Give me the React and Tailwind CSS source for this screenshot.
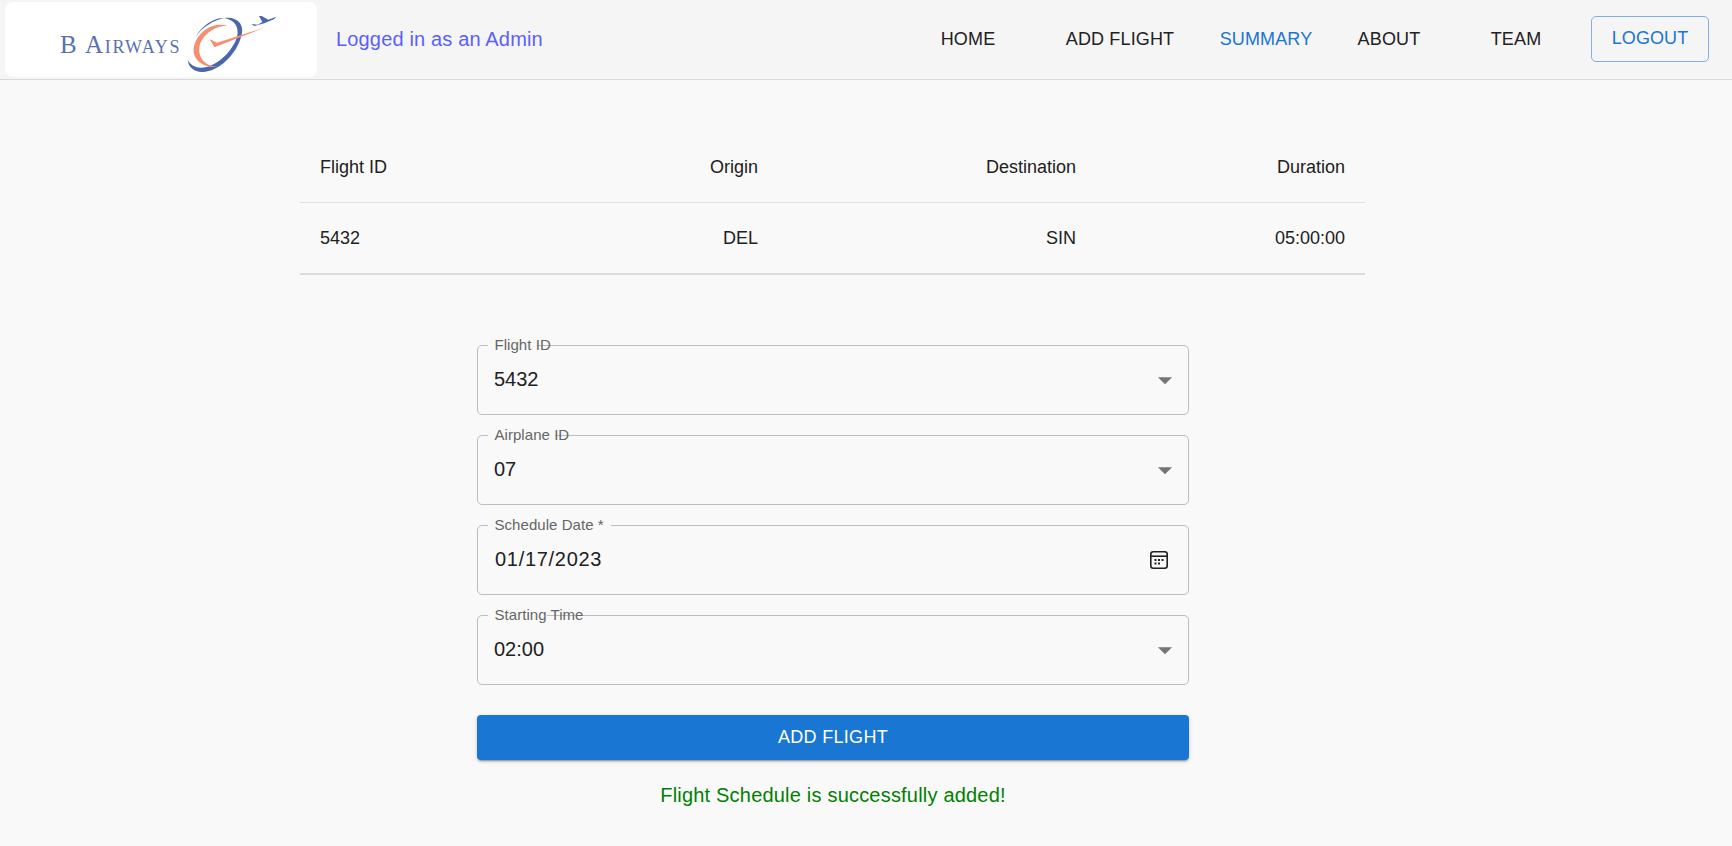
import React from "react";

const navItems = [
  { label: "HOME", width: "w-[150px]", color: "text-[#212121]" },
  { label: "ADD FLIGHT", width: "w-[154px]", color: "text-[#212121]" },
  { label: "SUMMARY", width: "w-[138px]", color: "text-[#1976d2]" },
  { label: "ABOUT", width: "w-[108px]", color: "text-[#212121]" },
  { label: "TEAM", width: "w-[146px]", color: "text-[#212121]" },
];

const fields = [
  { label: "Flight ID", value: "5432", notch: "w-[49px]", icon: "arrow" },
  { label: "Airplane ID", value: "07", notch: "w-[67px]", icon: "arrow" },
  { label: "Schedule Date *", value: "01/17/2023", notch: "w-[123px]", icon: "calendar" },
  { label: "Starting Time", value: "02:00", notch: "w-[59px]", icon: "arrow" },
];

const LogoMark = () => (
  <svg width="94" height="60" viewBox="105 30 280 180" className="mt-[8px] shrink-0">
    <path
      d="M222 42C262 38 285 62 272 100C258 150 205 205 155 204C130 203 115 190 112 168C122 185 140 195 165 190C215 180 262 120 262 85C262 60 245 46 222 42Z"
      fill="#4a67ae"
    />
    <path d="M222 42C190 40 155 65 135 100C155 70 190 48 222 42Z" fill="#4a67ae" />
    <path
      d="M232 66C190 50 135 85 130 135C127 170 165 195 205 188C170 190 143 165 147 130C152 95 195 62 232 66Z"
      fill="#f58f72"
    />
    <path d="M178 105L200 116L345 70L192 130Z" fill="#f58f72" />
    <path
      d="M303 60L322 62L336 54L326 36L334 36L354 47L378 38L372 45L342 58L312 66Z"
      fill="#4a67ae"
    />
  </svg>
);

const ArrowIcon = () => (
  <svg width="34" height="34" viewBox="0 0 24 24" fill="#757575">
    <path d="M7 10l5 5 5-5z" />
  </svg>
);

const CalendarIcon = () => (
  <svg width="20" height="20" viewBox="0 0 20 20" fill="none">
    <rect x="1.800" y="1.800" width="16.400" height="16.400" rx="2.500" stroke="#212121" strokeWidth="1.600" />
    <path d="M2 6.200h16" stroke="#212121" strokeWidth="1.600" />
    <path
      d="M5.500 9h2v2h-2zM9 9h2v2h-2zM12.500 9h2v2h-2zM5.500 12.500h2v2h-2zM9 12.500h2v2h-2z"
      fill="#212121"
    />
  </svg>
);

const Field = ({ label, value, notch, icon }) => (
  <div className="relative flex h-[70px] items-center justify-between rounded-[5px] border border-[#bdbdbd] pl-[16px] pr-[6px]">
    <span className={`absolute left-[10px] top-[-2px] h-[3px] bg-[#f9f9f9] ${notch}`} />
    <span className="absolute left-[16.500px] top-[-10px] text-[15px] leading-[18px] tracking-[0.05px] text-[#666666]">
      {label}
    </span>
    <span className={`mb-[2px] text-[20px] leading-[24px] text-[#212121] ${icon === "calendar" ? "pl-px tracking-[0.7px]" : ""}`}>
      {value}
    </span>
    {icon === "arrow" ? (
      <ArrowIcon />
    ) : (
      <span className="mr-[13px] flex">
        <CalendarIcon />
      </span>
    )}
  </div>
);

const App = () => {
  return (
    <div className="min-h-screen bg-[#f9f9f9] font-['Liberation_Sans',Arial,sans-serif]">
      {/* Header */}
      <header className="flex h-[80px] items-center border-b border-[#d9d9d9] bg-[#f5f5f5] pl-[5px] pr-[23px]">
        <div className="flex h-[75px] w-[312px] items-center rounded-[8px] bg-white pl-[55px]">
          <span className="mt-[10px] w-[125px] shrink-0 font-['Liberation_Serif',serif] text-[25px] leading-none tracking-[1.7px] text-[#5a71b0] [font-variant:small-caps]">
            B Airways
          </span>
          <LogoMark />
        </div>
        <span className="mb-[2px] ml-[19px] text-[20px] tracking-[0.16px] text-[#5a5fff]">
          Logged in as an Admin
        </span>
        <nav className="ml-auto flex items-center">
          {navItems.map((item) => (
            <span
              key={item.label}
              className={`text-center text-[18px] tracking-[0.15px] ${item.width} ${item.color}`}
            >
              {item.label}
            </span>
          ))}
          <button className="mb-[2px] ml-[2px] h-[46px] w-[118px] rounded-[5px] border border-[#7fb0e6] text-[18px] tracking-[0.1px] text-[#1976d2]">
            LOGOUT
          </button>
        </nav>
      </header>

      {/* Flight table */}
      <table className="ml-[300px] mt-[51px] w-[1065px] table-fixed text-[18px] text-[#212121]">
        <thead>
          <tr className="h-[71px] border-b border-[#e0e0e0]">
            <th className="w-[250px] pl-[20px] pt-[3px] text-left font-normal">Flight ID</th>
            <th className="w-[226px] pr-[18px] pt-[3px] text-right font-normal">Origin</th>
            <th className="w-[318px] pr-[18px] pt-[3px] text-right font-normal">Destination</th>
            <th className="pr-[20px] pt-[3px] text-right font-normal">Duration</th>
          </tr>
        </thead>
        <tbody>
          <tr className="h-[72px] border-b-2 border-[#dcdcdc]">
            <td className="pl-[20px] pt-[2px]">5432</td>
            <td className="pr-[18px] pt-[2px] text-right">DEL</td>
            <td className="pr-[18px] pt-[2px] text-right">SIN</td>
            <td className="pr-[20px] pt-[2px] text-right">05:00:00</td>
          </tr>
        </tbody>
      </table>

      {/* Schedule form */}
      <form className="ml-[477px] mt-[70px] flex w-[712px] flex-col">
        <div className="flex flex-col gap-[20px]">
          {fields.map((field) => (
            <Field key={field.label} {...field} />
          ))}
        </div>
        <button
          type="button"
          className="mt-[30px] h-[45px] rounded-[4px] bg-[#1976d2] text-[18px] tracking-[0.3px] text-white shadow-[0_3px_1px_-2px_rgba(0,0,0,0.2),0_2px_2px_0_rgba(0,0,0,0.14),0_1px_5px_0_rgba(0,0,0,0.12)]"
        >
          ADD FLIGHT
        </button>
        <p className="mt-[23px] text-center text-[20px] leading-[24px] tracking-[0.2px] text-[#008000]">
          Flight Schedule is successfully added!
        </p>
      </form>
    </div>
  );
};

export default App;
